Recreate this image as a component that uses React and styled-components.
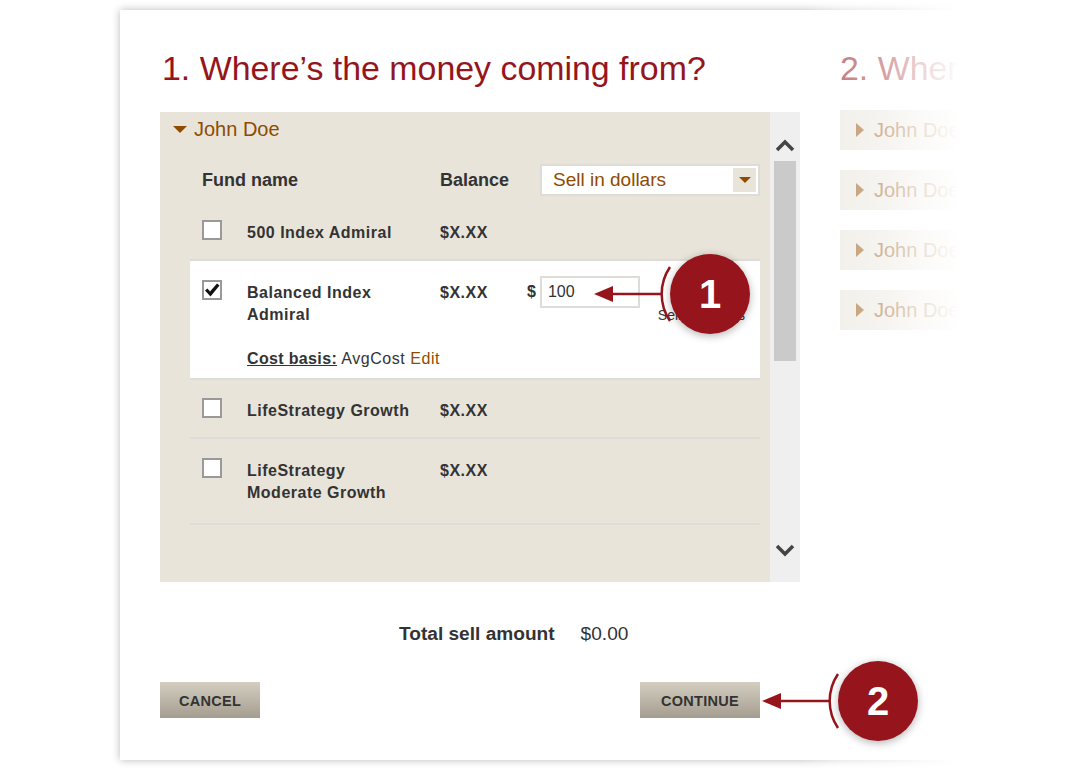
import React from 'react';
import styled, { createGlobalStyle } from 'styled-components';

const GlobalStyle = createGlobalStyle`
  html, body {
    margin: 0;
    padding: 0;
    background: #fff;
    overflow: hidden;
  }
  body {
    font-family: "Liberation Sans", Arial, sans-serif;
    color: #333;
  }
`;

const RED = '#96151d';
const BROWN = '#8f4b00';
const SAND = '#e8e4da';

const Page = styled.div`
  position: relative;
  width: 1080px;
  height: 770px;
  padding: 10px 0 0 120px;
  box-sizing: border-box;
  overflow: hidden;
`;

const Card = styled.div`
  position: relative;
  width: 900px;
  height: 750px;
  padding: 0 0 0 40px;
  box-sizing: border-box;
  display: flex;
  gap: 40px;
  background: #fff;
  box-shadow: 0 0 8px rgba(0, 0, 0, 0.28);
`;

/* whites out the second step towards the right edge, shadow included */
const Fade = styled.div`
  position: absolute;
  left: 680px;
  top: -10px;
  width: 280px;
  height: 770px;
  z-index: 2;
  background: linear-gradient(
    to right,
    rgba(255, 255, 255, 0) 0,
    rgba(255, 255, 255, 0.45) 40px,
    rgba(255, 255, 255, 0.6) 85px,
    rgba(255, 255, 255, 0.84) 125px,
    rgba(255, 255, 255, 0.95) 150px,
    #fff 158px
  );
`;

const Column = styled.section`
  flex: none;
  width: ${(p) => p.$width}px;
`;

const Title = styled.h1`
  margin: 0 0 0 ${(p) => p.$indent || 0}px;
  padding-top: 36px;
  height: 66px;
  font-size: 33.9px;
  line-height: 44px;
  font-weight: 400;
  color: ${RED};
  white-space: nowrap;
`;

const Panel = styled.div`
  width: 640px;
  height: 470px;
  display: flex;
  background: ${SAND};
`;

const PanelBody = styled.div`
  flex: 1;
  min-width: 0;
`;

const AccountHeader = styled.div`
  display: flex;
  align-items: center;
  gap: 7px;
  height: 34px;
  padding-left: 13px;
  font-size: 20px;
  color: ${BROWN};
`;

const TriangleDown = styled.span`
  width: 0;
  height: 0;
  border-left: ${(p) => p.$size}px solid transparent;
  border-right: ${(p) => p.$size}px solid transparent;
  border-top: ${(p) => p.$size}px solid ${BROWN};
`;

const Rows = styled.div`
  margin: 0 10px 0 30px;
  border-bottom: 2px solid #dedcd8;
`;

const HeadRow = styled.div`
  display: grid;
  grid-template-columns: 238px 100px 220px;
  align-items: center;
  height: 53px;
  padding: 15px 0 0 12px;
  box-sizing: border-box;
  font-size: 18px;
  font-weight: 700;
`;

const SelectBox = styled.div`
  display: flex;
  align-items: center;
  justify-content: space-between;
  height: 32px;
  box-sizing: border-box;
  padding: 0 2px 0 11px;
  border: 2px solid #dddcd8;
  background: #fff;
  font-size: 19px;
  font-weight: 400;
  color: ${BROWN};
`;

const SelectArrow = styled.span`
  display: flex;
  align-items: center;
  justify-content: center;
  width: 23px;
  height: 24px;
  background: ${SAND};
`;

const FundRow = styled.div`
  position: relative;
  display: grid;
  grid-template-columns: 45px 193px 87px 1fr;
  align-content: start;
  min-height: ${(p) => p.$height}px;
  box-sizing: border-box;
  padding: ${(p) => p.$pad || 20}px 0 0 12px;
  border-top: 2px solid ${(p) => (p.$first ? 'transparent' : '#dedcd8')};
  background: ${(p) => (p.$selected ? '#fff' : 'transparent')};
  font-size: 16px;
  line-height: 22px;
  font-weight: 700;
`;

const Check = styled.span`
  display: flex;
  align-items: center;
  justify-content: center;
  width: 20px;
  height: 20px;
  margin-top: -1px;
  box-sizing: border-box;
  border: 2px solid #999;
  background: #fff;
`;

const FundName = styled.div`
  margin-top: 1px;
  letter-spacing: 0.5px;
`;

const Amount = styled.div`
  margin-top: 1px;
  letter-spacing: 0.5px;
`;

const AmountCell = styled.div`
  display: flex;
  flex-direction: column;
  align-items: flex-end;
  margin-top: -5px;
`;

const AmountLine = styled.div`
  display: flex;
  align-items: center;
  align-self: flex-start;
  gap: 4px;
`;

const AmountInput = styled.input`
  width: 100px;
  height: 32px;
  box-sizing: border-box;
  padding: 0 6px;
  border: 2px solid #dddcd8;
  border-radius: 0;
  outline: none;
  background: #fff;
  font-family: inherit;
  font-size: 16px;
  color: #333;
`;

const SellNote = styled.div`
  margin: -1px 15px 0 0;
  font-size: 14px;
  line-height: 16px;
  font-weight: 400;
`;

const CostLine = styled.div`
  grid-column: 2 / -1;
  margin-top: 22px;
  font-weight: 400;
  letter-spacing: 0.55px;
`;

const CostLabel = styled.span`
  font-weight: 700;
  text-decoration: underline;
  letter-spacing: 0.35px;
`;

const EditLink = styled.span`
  color: ${BROWN};
`;

const ScrollTrack = styled.div`
  flex: none;
  width: 30px;
  display: flex;
  flex-direction: column;
  align-items: center;
  padding-top: 26px;
  box-sizing: border-box;
  background: #efefef;
`;

const ScrollThumb = styled.div`
  width: 22px;
  height: 200px;
  margin: 9px 0 183px;
  background: #cacaca;
`;

const TotalRow = styled.div`
  display: flex;
  align-items: center;
  gap: 26px;
  width: 600px;
  height: 24px;
  margin: 40px 0 36px;
  padding-left: 239px;
  box-sizing: border-box;
  font-size: 19.1px;
`;

const TotalLabel = styled.strong`
  font-weight: 700;
`;

const ButtonRow = styled.div`
  position: relative;
  display: flex;
  justify-content: space-between;
  width: 600px;
`;

const ActionButton = styled.button`
  width: ${(p) => p.$width}px;
  height: 36px;
  padding: 1px 0 0;
  border: 0;
  background: linear-gradient(to bottom, #d3cec1, #a59d8f);
  font-family: inherit;
  font-size: 14.5px;
  font-weight: 700;
  letter-spacing: 0.3px;
  color: #333;
`;

const Callout = styled.div`
  position: absolute;
  left: ${(p) => p.$left}px;
  top: ${(p) => p.$top}px;
  z-index: 3;
  display: flex;
  align-items: center;
`;

const CalloutCircle = styled.div`
  display: flex;
  align-items: center;
  justify-content: center;
  width: 80px;
  height: 80px;
  border-radius: 50%;
  background: ${RED};
  box-shadow: 0 2px 8px rgba(0, 0, 0, 0.3);
  font-size: 40px;
  font-weight: 700;
  color: #fff;
`;

const CalloutArrow = styled.svg`
  display: block;
  flex: none;
  overflow: visible;
`;

const FutureRow = styled.div`
  display: flex;
  align-items: center;
  gap: 10px;
  width: 200px;
  height: 40px;
  margin-bottom: 20px;
  padding-left: 16px;
  box-sizing: border-box;
  background: ${SAND};
  font-size: 20px;
  color: ${BROWN};
  white-space: nowrap;
`;

const TriangleRight = styled.span`
  width: 0;
  height: 0;
  border-top: 7px solid transparent;
  border-bottom: 7px solid transparent;
  border-left: 8px solid ${BROWN};
`;

const NextColumnBody = styled.div`
  margin-top: -2px;
`;

const ChevronIcon = styled.svg`
  display: block;
  flex: none;
`;

const Chevron = ({ up }) => (
  <ChevronIcon width="20" height="14" viewBox="0 0 20 14">
    <path
      d={up ? 'M2 12 L10 4 L18 12' : 'M2 2 L10 10 L18 2'}
      fill="none"
      stroke="#444"
      strokeWidth="3.5"
    />
  </ChevronIcon>
);

const CheckMark = () => (
  <svg width="16" height="14" viewBox="0 0 16 14">
    <path d="M1 7.5 L3.5 5.5 L6 8.5 L13 0.5 L15.5 2.5 L6.5 13.5 Z" fill="#111" />
  </svg>
);

const Badge = ({ n, left, top }) => (
  <Callout $left={left} $top={top}>
    <CalloutArrow width="76" height="80" viewBox="0 0 76 80">
      <path d="M0 40 L19 32 V48 Z" fill={RED} />
      <path d="M19 40 H68" stroke={RED} strokeWidth="2.5" />
      <path d="M76 13 A48 48 0 0 0 76 67" fill="none" stroke={RED} strokeWidth="2.5" />
    </CalloutArrow>
    <CalloutCircle>{n}</CalloutCircle>
  </Callout>
);

const funds = [
  { name: '500 Index Admiral', height: 60, first: true },
  { name: <>Balanced Index<br />Admiral</>, height: 119, selected: true },
  { name: 'LifeStrategy Growth', height: 59, pad: 19 },
  { name: <>LifeStrategy<br />Moderate Growth</>, height: 86 },
];

const App = () => (
  <>
    <GlobalStyle />
    <Page>
      <Card>
        <Column $width={640}>
          <Title $indent={2}>1. Where’s the money coming from?</Title>
          <Panel>
            <PanelBody>
              <AccountHeader>
                <TriangleDown $size={7} />
                John Doe
              </AccountHeader>
              <Rows>
                <HeadRow>
                  <span>Fund name</span>
                  <span>Balance</span>
                  <SelectBox>
                    Sell in dollars
                    <SelectArrow>
                      <TriangleDown $size={6} />
                    </SelectArrow>
                  </SelectBox>
                </HeadRow>
                {funds.map((fund, i) => (
                  <FundRow
                    key={i}
                    $height={fund.height}
                    $pad={fund.pad}
                    $first={fund.first}
                    $selected={fund.selected}
                  >
                    <Check>{fund.selected && <CheckMark />}</Check>
                    <FundName>{fund.name}</FundName>
                    <Amount>$X.XX</Amount>
                    {fund.selected && (
                      <>
                        <AmountCell>
                          <AmountLine>
                            $
                            <AmountInput defaultValue="100" readOnly />
                          </AmountLine>
                          <SellNote>Sell all shares</SellNote>
                        </AmountCell>
                        <CostLine>
                          <CostLabel>Cost basis:</CostLabel> AvgCost <EditLink>Edit</EditLink>
                        </CostLine>
                        <Badge n={1} left={404} top={-7} />
                      </>
                    )}
                  </FundRow>
                ))}
              </Rows>
            </PanelBody>
            <ScrollTrack>
              <Chevron up />
              <ScrollThumb />
              <Chevron />
            </ScrollTrack>
          </Panel>
          <TotalRow>
            <TotalLabel>Total sell amount</TotalLabel>
            <span>$0.00</span>
          </TotalRow>
          <ButtonRow>
            <ActionButton $width={100}>CANCEL</ActionButton>
            <ActionButton $width={120}>CONTINUE</ActionButton>
            <Badge n={2} left={602} top={-21} />
          </ButtonRow>
        </Column>
        <Column $width={200}>
          <Title>2. Where</Title>
          <NextColumnBody>
            {[0, 1, 2, 3].map((i) => (
              <FutureRow key={i}>
                <TriangleRight />
                John Doe
              </FutureRow>
            ))}
          </NextColumnBody>
        </Column>
        <Fade />
      </Card>
    </Page>
  </>
);

export default App;
